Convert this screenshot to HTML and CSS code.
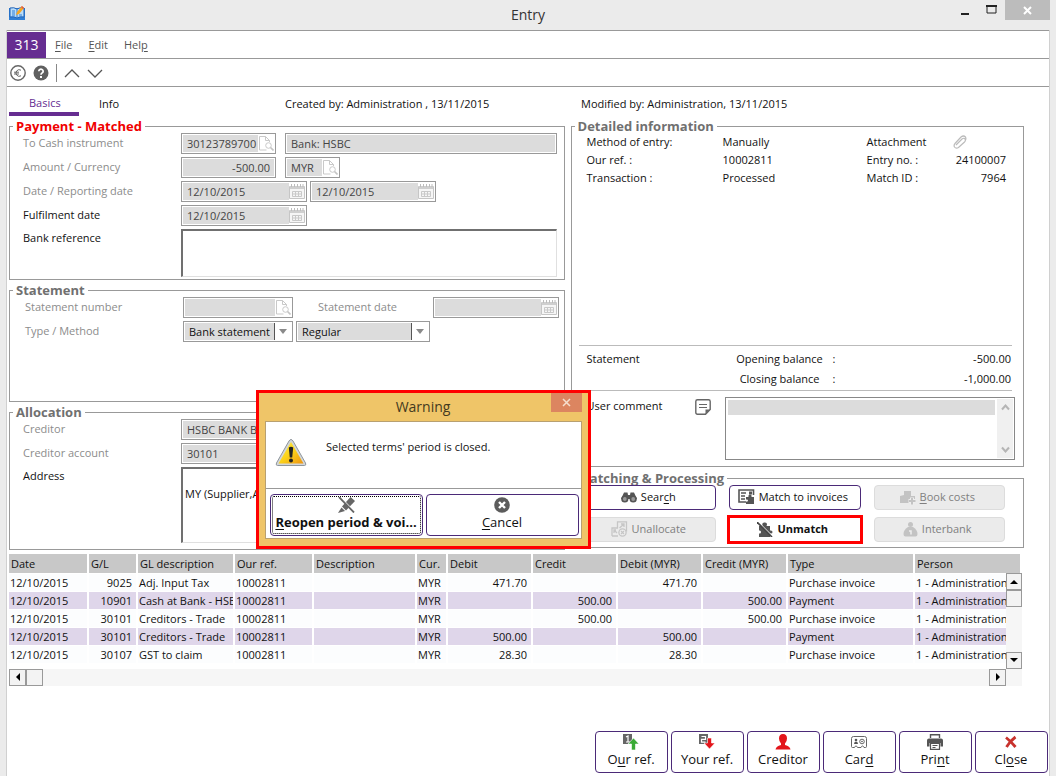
FILE: index.html
```html
<!DOCTYPE html>
<html lang="en">

<head>
    <meta charset="UTF-8">
    <title>Entry</title>
    <link rel="stylesheet" href="styles.css">
</head>

<body>
    <!-- shared icons -->
    <svg class="defs" width="0" height="0">
        <symbol id="lookup" viewBox="0 0 16 16">
            <path d="M0 0h16v16H0z" fill="#fff" />
            <path d="M1.500 15V1.500h6l4 4M7.500 1.500v4h4v1.500M1.500 15h7" fill="none" stroke="#c9c9c9" />
            <circle cx="10.500" cy="10.500" r="2.800" fill="#fff" stroke="#c9c9c9" />
            <path d="M12.500 12.500l3 3" stroke="#c4c4c4" stroke-width="1.600" />
        </symbol>
        <symbol id="calendar" viewBox="0 0 16 16">
            <path d="M.5 3.500h15v12H.5z" fill="#f6f6f6" stroke="#c6c6c6" />
            <path d="M1 3h14v3H1z" fill="#cfcfcf" />
            <path d="M2.500 1v3M5.500 1v3M8.500 1v3M11.500 1v3M14 1v3" stroke="#bdbdbd" />
            <path d="M3.500 8.500h9v5h-9zM6.500 8.500v5M9.500 8.500v5M3.500 11h9" fill="none" stroke="#c9c9c9" />
        </symbol>
    </svg>

    <header class="titlebar">
        <svg class="app-icon" width="18" height="16" viewBox="0 0 18 16">
            <path d="M1 2h16v12H1z" fill="#2f7fd6" />
            <path d="M2 2q4-1 7 1 3-2 7-1v9q-4-1-7 1-3-2-7-1z" fill="#b9dcf8" stroke="#1f62b8" />
            <path d="M9 3v9M4 5h3M4 7h3M4 9h3M11 9h3" stroke="#2f7fd6" />
            <path d="M8 9l1-3 5-6 2 2-5 6z" fill="#f5a623" />
            <path d="M13 1l1-1 2 2-1 1z" fill="#e2574c" />
        </svg>
        <h1>Entry</h1>
        <div class="window-buttons">
            <button aria-label="Minimize"><svg width="10" height="12"><path d="M1 10h8" stroke="#222" stroke-width="2" /></svg></button>
            <button aria-label="Maximize"><svg width="12" height="10"><path d="M1 1h9v7H1z" fill="none" stroke="#222" /><path d="M0 1h11" stroke="#222" stroke-width="2" /></svg></button>
            <button class="win-close" aria-label="Close window"><svg width="9" height="9"><path d="M1 1l7 7M8 1l-7 7" stroke="#fff" stroke-width="2" /></svg></button>
        </div>
    </header>

    <main class="window">
        <nav class="menubar">
            <span class="company">313</span>
            <a href="#"><u>F</u>ile</a>
            <a href="#"><u>E</u>dit</a>
            <a href="#">Hel<u>p</u></a>
        </nav>

        <div class="toolbar">
            <button aria-label="Currency"><svg width="16" height="16"><circle cx="8" cy="8" r="7.200" fill="none" stroke="#666" stroke-width="1.400" /><path d="M11 5.200A3.300 3.300 0 1 0 11 10.800M4 7.200h5M4 9h5" fill="none" stroke="#666" /></svg></button>
            <button aria-label="Help topics"><svg width="16" height="16"><circle cx="8" cy="8" r="7.500" fill="#606060" /><path d="M5.800 6.200a2.200 2 0 1 1 3.500 1.600Q8 8.500 8 9.800" fill="none" stroke="#fff" stroke-width="1.700" /><path d="M7 11h2v2H7z" fill="#fff" /></svg></button>
            <span class="separator"></span>
            <button aria-label="Previous"><svg width="16" height="16"><path d="M1 12l7-7 7 7" fill="none" stroke="#555" stroke-width="1.300" /></svg></button>
            <button aria-label="Next"><svg width="16" height="16"><path d="M1 5l7 7 7-7" fill="none" stroke="#555" stroke-width="1.300" /></svg></button>
        </div>

        <div class="content">
            <div class="tab-row">
                <div class="tabs">
                    <button class="tab active">Basics</button>
                    <button class="tab">Info</button>
                </div>
                <span>Created by: Administration , 13/11/2015</span>
                <span>Modified by: Administration, 13/11/2015</span>
            </div>

            <div class="columns">
                <div class="left">
                    <fieldset class="group payment">
                        <legend class="red">Payment - Matched</legend>
                        <div class="row">
                            <label class="off" for="cash">To Cash instrument</label>
                            <span class="field w-code"><input id="cash" value="30123789700" readonly><svg><use href="#lookup" /></svg></span>
                            <span class="field w-fill"><input aria-label="Bank" value="Bank: HSBC" readonly></span>
                        </div>
                        <div class="row">
                            <label class="off" for="amount">Amount / Currency</label>
                            <span class="field w-code"><input class="num" id="amount" value="-500.00" readonly></span>
                            <span class="field w-cur"><input aria-label="Currency code" value="MYR" readonly><svg><use href="#lookup" /></svg></span>
                        </div>
                        <div class="row tight">
                            <label class="off" for="date">Date / Reporting date</label>
                            <span class="field w-date"><input id="date" value="12/10/2015" readonly><svg><use href="#calendar" /></svg></span>
                            <span class="field w-date"><input aria-label="Reporting date" value="12/10/2015" readonly><svg><use href="#calendar" /></svg></span>
                        </div>
                        <div class="row">
                            <label for="fulfil">Fulfilment date</label>
                            <span class="field w-date"><input id="fulfil" value="12/10/2015" readonly><svg><use href="#calendar" /></svg></span>
                        </div>
                        <div class="row tall">
                            <label for="bankref">Bank reference</label>
                            <textarea class="box bankref" id="bankref"></textarea>
                        </div>
                    </fieldset>

                    <fieldset class="group statement">
                        <legend>Statement</legend>
                        <div class="row">
                            <label class="off" for="stno">Statement number</label>
                            <span class="field w-stmt"><input id="stno" readonly><svg><use href="#lookup" /></svg></span>
                            <label class="off second" for="stdate">Statement date</label>
                            <span class="field w-date"><input id="stdate" readonly><svg><use href="#calendar" /></svg></span>
                        </div>
                        <div class="row tight">
                            <label class="off" for="type">Type / Method</label>
                            <span class="drop w-stmt"><select id="type"><option>Bank statement</option></select></span>
                            <span class="drop w-method"><select aria-label="Method"><option>Regular</option></select></span>
                        </div>
                    </fieldset>

                    <fieldset class="group allocation">
                        <legend>Allocation</legend>
                        <div class="row">
                            <label class="off" for="creditor">Creditor</label>
                            <span class="field w-fill"><input id="creditor" value="HSBC BANK BERHAD" readonly></span>
                        </div>
                        <div class="row">
                            <label class="off" for="account">Creditor account</label>
                            <span class="field w-code"><input id="account" value="30101" readonly><svg><use href="#lookup" /></svg></span>
                        </div>
                        <div class="row tall">
                            <label for="address">Address</label>
                            <textarea class="box address" id="address">
MY (Supplier,A</textarea>
                        </div>
                    </fieldset>
                </div>

                <div class="right">
                    <fieldset class="group details">
                        <legend>Detailed information</legend>
                        <div class="info">
                            <span>Method of entry:</span><span>Manually</span><span>Attachment</span>
                            <svg class="clip" width="14" height="14"><path d="M3 10l6-6q2-1.500 3 0t-.5 3l-6 5.500q-2.500 1.500-4-.5-1-2 .5-3.500l6-6.500q2.500-2 4.500 0 1 2-.5 4" fill="none" stroke="#bbb" stroke-width="1.200" /></svg>
                            <span>Our ref. :</span><span>10002811</span><span>Entry no. :</span><span class="num">24100007</span>
                            <span>Transaction :</span><span>Processed</span><span>Match ID :</span><span class="num">7964</span>
                        </div>
                        <div class="balances">
                            <span>Statement</span><span class="caption">Opening balance</span><span>:</span><span class="num">-500.00</span>
                            <span></span><span class="caption">Closing balance</span><span>:</span><span class="num">-1,000.00</span>
                        </div>
                        <div class="comment">
                            <label for="comment">User comment</label>
                            <svg class="note" width="16" height="16"><path d="M2.500.8h11q1.700 0 1.700 1.700v8l-4.700 4.700h-8q-1.700 0-1.700-1.700v-11Q.8.800 2.500.8z" fill="none" stroke="#666" stroke-width="1.400" /><path d="M4 5.500h8M4 8.500h8" stroke="#666" stroke-width="1.200" /><path d="M15 10.500h-4.500V15z" fill="#666" /></svg>
                            <div class="comment-box">
                                <textarea id="comment" readonly></textarea>
                                <div class="mini-scroll">
                                    <svg width="9" height="9"><path d="M1 6.500l3.500-4 3.500 4" fill="none" stroke="#b5b5b5" stroke-width="2" /></svg>
                                    <svg width="9" height="9"><path d="M1 2.500l3.500 4 3.500-4" fill="none" stroke="#b5b5b5" stroke-width="2" /></svg>
                                </div>
                            </div>
                        </div>
                    </fieldset>

                    <fieldset class="group matching">
                        <legend>Matching &amp; Processing</legend>
                        <div class="actions">
                            <button class="btn"><svg width="16" height="12"><path d="M0 8L3 1.500h3.500L7 4h2l.5-2.500H13L16 8z" fill="#555" /><circle cx="3.800" cy="8" r="3.600" fill="#555" /><circle cx="12.200" cy="8" r="3.600" fill="#555" /><circle cx="3.800" cy="8" r="1.900" fill="#999" /><circle cx="12.200" cy="8" r="1.900" fill="#999" /></svg><span>Sear<u>c</u>h</span></button>
                            <button class="btn"><svg width="17" height="16"><path d="M15.500 6V1H1v12h7" fill="none" stroke="#555" stroke-width="1.600" /><path d="M3 4h5M3 7h4M3 10h4" stroke="#555" stroke-width="1.400" /><path d="M11 2.500h3v3h-3z" fill="#555" /><path d="M8 8h2.500Q10 5.500 12 5.500t1.500 2.500H16v7H8v-2.500q2 .5 2-1t-2-1z" fill="#555" /></svg>Match to invoices</button>
                            <button class="btn" disabled><svg width="16" height="15"><path d="M4 5V1h7v5h4v4H9v3H0V6z" fill="#c3c3c3" /><path d="M12 7.500v7M8.500 11h7" stroke="#eee" stroke-width="4" /><path d="M12 8v6.500M9 11h6.500" stroke="#c3c3c3" stroke-width="2" /></svg><span><u>B</u>ook costs</span></button>
                            <button class="btn" disabled><svg width="17" height="16"><path d="M6.500 7V.8h9v9H11M1 15V7h6M1 15h6" fill="none" stroke="#c6c6c6" stroke-width="1.300" /><path d="M8.500 7l4.500-4M10 3h3v3M3 9l3 3M3 12V9h2" fill="none" stroke="#c6c6c6" stroke-width="1.300" /><circle cx="11.500" cy="11.500" r="3.600" fill="#eee" stroke="#c6c6c6" stroke-width="1.300" /><path d="M10 10l3 3M13 10l-3 3" stroke="#c6c6c6" stroke-width="1.200" /></svg>Unallocate</button>
                            <button class="btn marked"><svg width="16" height="15"><path d="M2 4h3.500Q4.500 0 8 .5q3 .5 1.500 3.500H13v4.500q2.500-.5 2.500 1.500T13 11.500V15H2v-3.500q2 .5 2-1.500T2 8.500z" fill="#555" /><path d="M1 0l15 15" stroke="#fff" stroke-width="1.500" /><path d="M0 0l15 15" stroke="#444" stroke-width="1.600" /></svg>Unmatch</button>
                            <button class="btn" disabled><svg width="15" height="15"><circle cx="7.500" cy="2.500" r="2.500" fill="#c3c3c3" /><path d="M5 5h5q4.500 3 4.500 7 0 2.500-2 2.500h-10q-2 0-2-2.500 0-4 4.500-7z" fill="#c3c3c3" /><path d="M6 9h2v3.500" fill="none" stroke="#eee" stroke-width="1.500" /></svg>Interbank</button>
                        </div>
                    </fieldset>
                </div>
            </div>

            <div class="grid">
                <table>
                    <colgroup>
                        <col class="c-date"><col class="c-gl"><col class="c-desc"><col class="c-date"><col class="c-text"><col class="c-cur">
                        <col class="c-money"><col class="c-money"><col class="c-money"><col class="c-money"><col class="c-type"><col>
                    </colgroup>
                    <thead>
                        <tr>
                            <th>Date</th><th>G/L</th><th>GL description</th><th>Our ref.</th><th>Description</th><th>Cur.</th>
                            <th>Debit</th><th>Credit</th><th>Debit (MYR)</th><th>Credit (MYR)</th><th>Type</th><th>Person</th>
                        </tr>
                    </thead>
                    <tbody>
                        <tr>
                            <td>12/10/2015</td><td class="num">9025</td><td>Adj. Input Tax</td><td>10002811</td><td></td><td>MYR</td>
                            <td class="num">471.70</td><td></td><td class="num">471.70</td><td></td><td>Purchase invoice</td><td>1 - Administration</td>
                        </tr>
                        <tr>
                            <td>12/10/2015</td><td class="num">10901</td><td>Cash at Bank - HSBC</td><td>10002811</td><td></td><td>MYR</td>
                            <td></td><td class="num">500.00</td><td></td><td class="num">500.00</td><td>Payment</td><td>1 - Administration</td>
                        </tr>
                        <tr>
                            <td>12/10/2015</td><td class="num">30101</td><td>Creditors - Trade</td><td>10002811</td><td></td><td>MYR</td>
                            <td></td><td class="num">500.00</td><td></td><td class="num">500.00</td><td>Purchase invoice</td><td>1 - Administration</td>
                        </tr>
                        <tr>
                            <td>12/10/2015</td><td class="num">30101</td><td>Creditors - Trade</td><td>10002811</td><td></td><td>MYR</td>
                            <td class="num">500.00</td><td></td><td class="num">500.00</td><td></td><td>Payment</td><td>1 - Administration</td>
                        </tr>
                        <tr>
                            <td>12/10/2015</td><td class="num">30107</td><td>GST to claim</td><td>10002811</td><td></td><td>MYR</td>
                            <td class="num">28.30</td><td></td><td class="num">28.30</td><td></td><td>Purchase invoice</td><td>1 - Administration</td>
                        </tr>
                    </tbody>
                </table>
                <div class="vscroll">
                    <button aria-label="Scroll up"><svg width="8" height="4"><path d="M0 4l4-4 4 4z" /></svg></button>
                    <span class="thumb"></span>
                    <button class="end" aria-label="Scroll down"><svg width="8" height="4"><path d="M0 0h8L4 4z" /></svg></button>
                </div>
                <div class="hscroll">
                    <button aria-label="Scroll left"><svg width="4" height="8"><path d="M4 0v8L0 4z" /></svg></button>
                    <span class="thumb"></span>
                    <button class="end" aria-label="Scroll right"><svg width="4" height="8"><path d="M0 0l4 4-4 4z" /></svg></button>
                </div>
            </div>
        </div>

        <footer class="footer">
            <button class="btn big"><svg width="16" height="16"><path d="M0 0h9v10H0z" fill="#666" /><path d="M3 3l2-1v6M3 8h4" fill="none" stroke="#fff" stroke-width="1.200" /><path d="M10.500 4l5.500 6h-3.500v6h-4v-6H5z" fill="#3aaa35" stroke="#fff" stroke-width=".6" /></svg><span>O<u>u</u>r ref.</span></button>
            <button class="btn big"><svg width="16" height="16"><path d="M0 0h9v10H0z" fill="#666" /><path d="M2.500 2.500h4v2.800h-4v2.800h4" fill="none" stroke="#fff" stroke-width="1.200" /><path d="M8.500 4h4v5H16l-5.500 6L5 9h3.500z" fill="#e3151b" stroke="#fff" stroke-width=".6" /></svg><span>Your ref.</span></button>
            <button class="btn big"><svg width="16" height="16"><path d="M8 0q4 0 4 4.500 0 3-2 5V11q5 1 5.500 4.500H.5Q1 12 6 11V9.500q-2-2-2-5Q4 0 8 0z" fill="#e3151b" /></svg><span>Creditor</span></button>
            <button class="btn big"><svg width="16" height="16"><path d="M2.500 2.500h11q2 0 2 2v8q0 1-1 1h-1.500q-.5-1.500-1.500-1.500T10 13.500H6.500q-.5-1.500-1.500-1.500t-1.500 1.500H1.500q-1 0-1-1v-8q0-2 2-2z" fill="none" stroke="#666" /><circle cx="5" cy="6" r="1.300" fill="#555" /><path d="M3 10q0-2.500 2-2.500T7 10z" fill="#555" /><circle cx="11" cy="7.500" r="2.300" fill="none" stroke="#666" /><circle cx="11" cy="7.500" r=".8" fill="#555" /></svg><span>Car<u>d</u></span></button>
            <button class="btn big"><svg width="16" height="16"><path d="M3.500 4V.7h9V4" fill="none" stroke="#555" stroke-width="1.400" /><path d="M2 4.500h12q2 0 2 2v6h-2.500V9h-11v3.500H0v-6q0-2 2-2z" fill="#555" /><path d="M3.500 9.500h9v5.800h-9z" fill="#fff" stroke="#555" stroke-width="1.200" /><path d="M5.500 11.500h5M5.500 13.500h3" stroke="#555" /></svg><span>Pri<u>n</u>t</span></button>
            <button class="btn big"><svg width="16" height="16"><path d="M3 3.500q5 4 9.500 9.500M12.500 3Q7 7 3.500 13" fill="none" stroke="#c8322d" stroke-width="2.800" /></svg><span>Cl<u>o</u>se</span></button>
        </footer>
    </main>

    <dialog class="warning" open aria-labelledby="warning-title">
        <div class="warning-title">
            <h2 id="warning-title">Warning</h2>
            <button class="warning-close" aria-label="Close warning"><svg width="9" height="9"><path d="M1 1l7 7M8 1l-7 7" stroke="#f6dfce" stroke-width="1.500" /></svg></button>
        </div>
        <div class="warning-panel">
            <div class="message">
                <svg width="32" height="29" viewBox="0 0 32 29">
                    <defs>
                        <linearGradient id="sign" x1="0" y1="0" x2="1" y2="1">
                            <stop offset="0" stop-color="#fff04a" />
                            <stop offset=".5" stop-color="#fbd21a" />
                            <stop offset="1" stop-color="#ee9410" />
                        </linearGradient>
                    </defs>
                    <path d="M16 1.500Q17 1.500 18 3l12.500 22q1 2.500-1 2.500h-27q-2 0-1-2.500L14 3q1-1.500 2-1.500z" fill="#d2d6da" stroke="#8f969c" />
                    <path d="M16 4l12.500 21.500h-25z" fill="url(#sign)" />
                    <path d="M13.800 9.500q2.200-1.500 4.400 0l-1 10h-2.400z" fill="#222" />
                    <circle cx="16" cy="22.500" r="2" fill="#222" />
                </svg>
                <p>Selected terms' period is closed.</p>
            </div>
            <div class="warning-actions">
                <button class="btn big focus"><svg width="17" height="16"><path d="M4 9.500L12.500 0 17 4 8 13.500z" fill="#666" /><path d="M3.500 10.500l3.500 3.500L0 16z" fill="#666" /><path d="M2 0l15 15.500" stroke="#fff" stroke-width="1.500" /><path d="M1 0l15 15.500" stroke="#666" stroke-width="1.800" /></svg><span><u>R</u>eopen period &amp; voi...</span></button>
                <button class="btn big"><svg width="16" height="16"><circle cx="8" cy="8" r="7.800" fill="#5c5c5c" /><path d="M5 5l6 6M11 5l-6 6" stroke="#fff" stroke-width="2.400" /></svg><span><u>C</u>ancel</span></button>
            </div>
        </div>
    </dialog>
</body>

</html>
```
FILE: styles.css
```css
* {
    box-sizing: border-box;
}

body {
    margin: 0;
    min-height: 100vh;
    display: flex;
    flex-direction: column;
    position: relative;
    background: #ebebeb;
    color: #111;
    font: 11px/18px "Open Sans", sans-serif;
}

button,
input,
select,
textarea {
    font: inherit;
    color: inherit;
    margin: 0;
    padding: 0;
    border: 0;
    border-radius: 0;
    background: none;
}

u {
    text-underline-offset: 2px;
}

.defs {
    position: absolute;
}

.num {
    text-align: right;
}

/* title bar */
.titlebar {
    display: grid;
    grid-template-columns: 1fr auto 1fr;
    height: 30px;
}

.app-icon {
    margin: 6px 0 0 8px;
}

.titlebar h1 {
    margin: 0;
    font-size: 14px;
    font-weight: normal;
    line-height: 30px;
    color: #333;
}

.window-buttons {
    display: flex;
    justify-content: flex-end;
    height: 20px;
    padding-right: 6px;
}

.window-buttons button {
    display: flex;
    align-items: center;
    justify-content: center;
    width: 27px;
}

.window-buttons .win-close {
    width: 45px;
    background: #bcbcbc;
}

/* window */
.window {
    flex: 1;
    display: flex;
    flex-direction: column;
    margin: 0 6px;
    border: solid #d0d0d0;
    border-width: 0 1px;
    background: #fff;
}

.menubar {
    display: flex;
    align-items: center;
    gap: 16px;
    height: 29px;
    border: solid #999;
    border-width: 1px 0;
}

.menubar a {
    color: #555;
    text-decoration: none;
}

.company {
    width: 39px;
    margin-right: -7px;
    background: #662d91;
    color: #fff;
    font-size: 14px;
    line-height: 26px;
    text-align: center;
}

.toolbar {
    display: flex;
    align-items: center;
    gap: 7px;
    height: 28px;
    padding-left: 3px;
    border-bottom: 1px solid #999;
}

.toolbar button {
    display: flex;
}

.separator {
    height: 18px;
    border-left: 1px solid #888;
}

.content {
    padding: 0 25px 0 2px;
}

.tab-row {
    display: grid;
    grid-template-columns: 276px 296px 1fr;
    line-height: 34px;
    height: 29px;
    margin-bottom: 4px;
}

.tabs {
    display: flex;
}

.tab {
    padding: 0 20px;
    line-height: 34px;
}

.tab.active {
    width: 70px;
    height: 29px;
    line-height: 32px;
    color: #662d91;
    border-bottom: 4px solid #662d91;
}

/* group boxes */
.columns {
    display: grid;
    grid-template-columns: 555fr 453fr;
    gap: 6px;
}

.left {
    display: flex;
    flex-direction: column;
    gap: 4px;
}

.right {
    display: flex;
    flex-direction: column;
    gap: 5px;
}

.group {
    min-width: 0;
    margin: 0;
    padding: 0 7px 2px 13px;
    border: 1px solid #999;
}

.group legend {
    margin-left: -10px;
    padding: 0 3px;
    color: #707070;
    font-size: 13px;
    font-weight: bold;
    line-height: 13px;
}

.group legend.red {
    color: #f00000;
}

.statement {
    min-height: 118px;
    padding: 0 4px 2px 15px;
}

.statement legend {
    margin-left: -12px;
}

.allocation {
    min-height: 144px;
}

.row {
    display: flex;
    gap: 9px;
    height: 24px;
}

.row.tight {
    gap: 3px;
}

.row.tall {
    height: auto;
}

.row label {
    width: 149px;
    line-height: 20px;
}

.row.tight label {
    width: 155px;
}

.row label.off {
    color: #8c8c8c;
}

.row label.second {
    width: 106px;
    margin-left: 16px;
}

.row.tall label {
    line-height: 17px;
}

.field {
    display: flex;
    height: 21px;
    padding: 1px;
    border: 1px solid #999;
}

.field input {
    flex: 1;
    min-width: 0;
    padding-left: 4px;
    background: #dcdcdc;
    color: #444;
}

.field .num {
    padding-right: 4px;
}

.field svg {
    width: 16px;
    height: 16px;
}

.w-code {
    width: 95px;
}

.w-cur {
    width: 55px;
}

.w-date {
    width: 126px;
}

.w-stmt {
    width: 110px;
}

.w-method {
    width: 134px;
}

.w-fill {
    flex: 1;
}

.drop {
    display: flex;
    align-items: center;
    height: 21px;
    padding: 1px;
    border: 1px solid #999;
}

.drop select {
    flex: 1;
    min-width: 0;
    height: 17px;
    padding-left: 4px;
    appearance: none;
    background: #dcdcdc;
    border-right: 1px solid #555;
}

.drop::after {
    content: "";
    margin: 0 4px;
    border: solid transparent;
    border-width: 5px 4px 0;
    border-top-color: #8a8a8a;
}

.box {
    flex: 1;
    resize: none;
    border: 1px solid #e0e0e0;
    border-top: 2px solid #707070;
    border-left: 2px solid #707070;
}

.bankref {
    height: 48px;
}

.address {
    height: 76px;
    padding: 16px 0 0 2px;
}

/* detailed information */
.details {
    padding: 0 8px 6px 7px;
}

.details legend {
    margin-left: -4px;
}

.info {
    display: grid;
    grid-template-columns: 136px 144px 66px 1fr;
    align-content: start;
    min-height: 212px;
    padding: 0 9px 0 8px;
}

.clip {
    margin: 2px 0 0 20px;
}

.info .num {
    white-space: nowrap;
}

.balances {
    display: grid;
    grid-template-columns: 140px 106px 1fr auto;
    line-height: 20px;
    margin: 0 3px 6px 0;
    padding: 3px 1px 1px 8px;
    border: solid #bbb;
    border-width: 1px 0;
}

.balances .caption {
    text-align: center;
}

.comment {
    display: flex;
    padding-left: 8px;
    line-height: 17px;
}

.comment label {
    width: 108px;
}

.note {
    margin: 2px 14px 0 0;
}

.comment-box {
    flex: 1;
    display: flex;
    height: 63px;
    padding: 1px;
    border: 1px solid #888;
}

.comment-box textarea {
    flex: 1;
    min-width: 0;
    margin: 1px 2px 0 1px;
    resize: none;
    background: linear-gradient(#dcdcdc, #dcdcdc) 0 0 / 100% 15px no-repeat;
}

.mini-scroll {
    display: flex;
    flex-direction: column;
    align-items: center;
    justify-content: space-between;
    width: 16px;
    padding: 4px 0;
    background: #f0f0f0;
}

/* buttons */
.btn {
    display: flex;
    align-items: center;
    justify-content: center;
    gap: 4px;
    height: 25px;
    padding: 0 4px 1px 0;
    border: 1px solid #4b2a78;
    border-radius: 4px;
    background: #fff;
    color: #111;
    white-space: nowrap;
}

.btn:disabled {
    border-color: #dcdcdc;
    background: #ebebeb;
    color: #808080;
}

.btn.marked {
    outline: 3px solid #f00;
    outline-offset: -1px;
    border-radius: 0;
    font-weight: bold;
}

.btn.big {
    flex-direction: column;
    gap: 0;
    width: 73px;
    height: 42px;
    padding: 0 1px 3px 0;
    font-size: 13px;
}

.actions {
    display: grid;
    grid-template-columns: repeat(3, 1fr);
    gap: 7px 13px;
    padding: 0 11px 3px 0;
}

/* entry lines */
.grid {
    position: relative;
    margin-top: 4px;
    margin-right: 2px;
}

.grid table {
    width: 100%;
    table-layout: fixed;
    border-collapse: collapse;
    margin-bottom: 5px;
}

.c-date {
    width: 79px;
}

.c-gl {
    width: 49px;
}

.c-desc {
    width: 97px;
}

.c-text {
    width: 103px;
}

.c-cur {
    width: 31px;
}

.c-money {
    width: 85px;
}

.c-type {
    width: 127px;
}

.grid th,
.grid td {
    height: 18px;
    padding: 0 1px;
    overflow: hidden;
    white-space: nowrap;
    text-align: left;
    font-weight: normal;
    line-height: 17px;
    border-right: 2px solid #fff;
    border-bottom: 1px solid #fff;
}

.grid th {
    height: 19px;
    padding-left: 2px;
    background: #c8c8c8;
}

.grid td.num {
    padding-right: 4px;
    text-align: right;
}

.grid tbody tr {
    background: #fcfdfe;
}

.grid tbody tr:nth-child(even) {
    background: #dfd6ea;
}

.vscroll,
.hscroll {
    display: flex;
    background: #f6f6f6;
}

.vscroll {
    position: absolute;
    top: 19px;
    right: 0;
    bottom: 17px;
    flex-direction: column;
    width: 16px;
}

.hscroll {
    height: 17px;
    padding-right: 16px;
}

.vscroll > *,
.hscroll > * {
    display: flex;
    align-items: center;
    justify-content: center;
    width: 17px;
    height: 17px;
    border: 1px solid #999;
    background: #f3f3f3;
}

.vscroll > * {
    width: 16px;
}

.vscroll .end {
    margin-top: auto;
}

.hscroll .end {
    margin-left: auto;
}

/* bottom buttons */
.footer {
    display: flex;
    justify-content: flex-end;
    gap: 3px;
    margin-top: auto;
    padding: 0 1px 3px;
}

/* warning dialog, lies over the form */
.warning {
    position: absolute;
    top: 390px;
    left: 256px;
    width: 335px;
    margin: 0;
    padding: 0 6px 7px;
    border: 3px solid #f00;
    background: #efc568;
    color: #111;
}

.warning-title {
    display: flex;
    height: 28px;
}

.warning-title h2 {
    flex: 1;
    margin: 0;
    padding-left: 30px;
    font-size: 14px;
    font-weight: normal;
    line-height: 28px;
    text-align: center;
    color: #443a20;
}

.warning-close {
    display: flex;
    align-items: center;
    justify-content: center;
    width: 31px;
    height: 19px;
    background: #dc8560;
}

.warning-panel {
    border: 1px solid #b8a070;
    background: #fff;
}

.message {
    display: flex;
    gap: 19px;
    height: 67px;
    padding: 16px 9px;
    border-bottom: 1px solid #999;
}

.message p {
    margin: 0;
}

.warning-actions {
    display: grid;
    grid-template-columns: 1fr 1fr;
    gap: 3px;
    padding: 5px 2px 2px 4px;
}

.warning-actions .btn.big {
    width: auto;
}

.btn.focus {
    font-weight: bold;
    outline: 1px dotted #000;
    outline-offset: -3px;
}
```
